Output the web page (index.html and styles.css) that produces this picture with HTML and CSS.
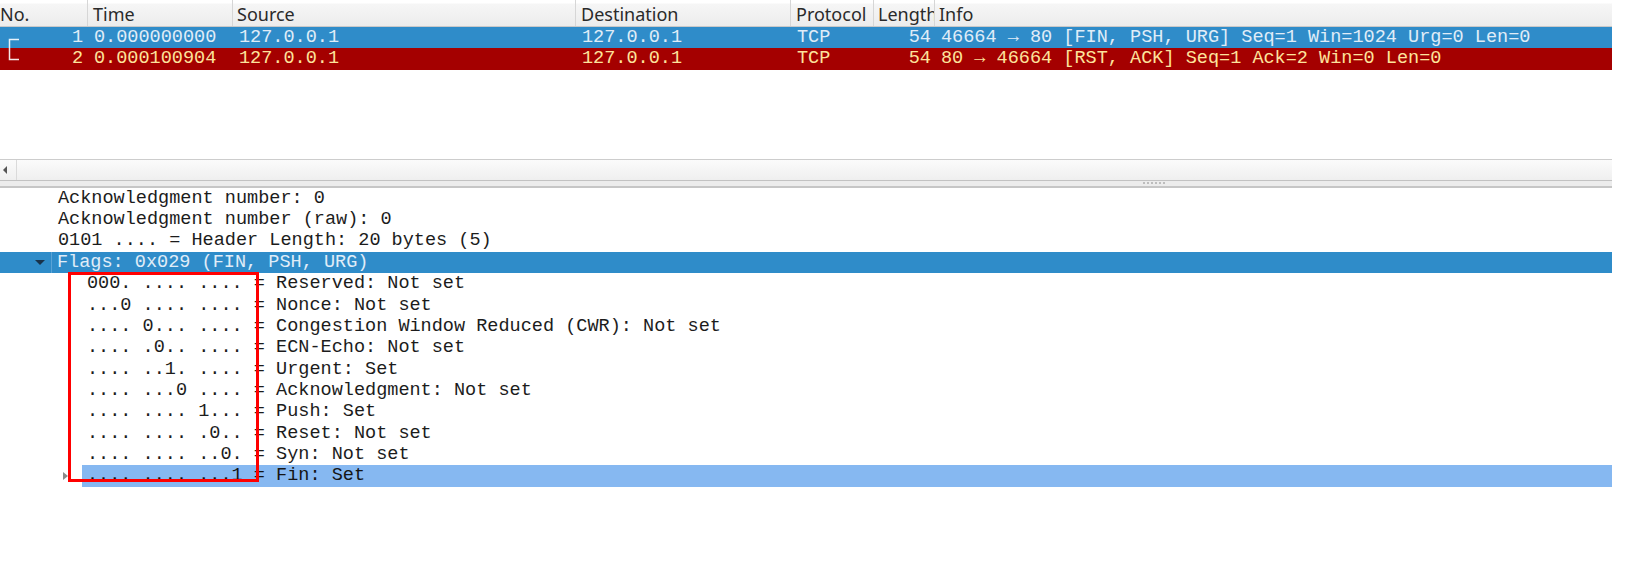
FILE: index.html
```html
<!DOCTYPE html>
<html>
<head>
<meta charset="utf-8">
<link rel="stylesheet" href="styles.css">
</head>
<body>
<div class="app">
  <div class="plist">
    <div class="phead">
      <div class="hc c-no">No.</div>
      <div class="hc c-time">Time</div>
      <div class="hc c-src">Source</div>
      <div class="hc c-dst">Destination</div>
      <div class="hc c-proto">Protocol</div>
      <div class="hc c-len">Length</div>
      <div class="hc c-info">Info</div>
    </div>
    <div class="prow prow-sel">
      <div class="pc c-no"><svg class="rel" width="20" height="22" viewBox="0 0 20 22"><path d="M19 12.5H9.5V22" fill="none" stroke="#e8f2fb" stroke-width="1.5"/></svg><span>1</span></div>
      <div class="pc c-time">0.000000000</div>
      <div class="pc c-src">127.0.0.1</div>
      <div class="pc c-dst">127.0.0.1</div>
      <div class="pc c-proto">TCP</div>
      <div class="pc c-len">54</div>
      <div class="pc c-info">46664 → 80 [FIN, PSH, URG] Seq=1 Win=1024 Urg=0 Len=0</div>
    </div>
    <div class="prow prow-bad">
      <div class="pc c-no"><svg class="rel" width="20" height="22" viewBox="0 0 20 22"><path d="M9.5 0V11.5H19" fill="none" stroke="#f4e6e6" stroke-width="1.5"/></svg><span>2</span></div>
      <div class="pc c-time">0.000100904</div>
      <div class="pc c-src">127.0.0.1</div>
      <div class="pc c-dst">127.0.0.1</div>
      <div class="pc c-proto">TCP</div>
      <div class="pc c-len">54</div>
      <div class="pc c-info">80 → 46664 [RST, ACK] Seq=1 Ack=2 Win=0 Len=0</div>
    </div>
    <div class="pempty"></div>
  </div>
  <div class="hscroll">
    <div class="sbtn"><span class="larrow"></span></div>
  </div>
  <div class="splitter"><span class="grip"></span></div>
  <div class="tree">
    <div class="trow t1">Acknowledgment number: 0</div>
    <div class="trow t1">Acknowledgment number (raw): 0</div>
    <div class="trow t1">0101 .... = Header Length: 20 bytes (5)</div>
    <div class="trow tsel">
      <div class="gut"><span class="down"></span></div>
      <div class="ttext">Flags: 0x029 (FIN, PSH, URG)</div>
    </div>
    <div class="trow t2">000. .... .... = Reserved: Not set</div>
    <div class="trow t2">...0 .... .... = Nonce: Not set</div>
    <div class="trow t2">.... 0... .... = Congestion Window Reduced (CWR): Not set</div>
    <div class="trow t2">.... .0.. .... = ECN-Echo: Not set</div>
    <div class="trow t2">.... ..1. .... = Urgent: Set</div>
    <div class="trow t2">.... ...0 .... = Acknowledgment: Not set</div>
    <div class="trow t2">.... .... 1... = Push: Set</div>
    <div class="trow t2">.... .... .0.. = Reset: Not set</div>
    <div class="trow t2">.... .... ..0. = Syn: Not set</div>
    <div class="trow tfin">
      <div class="fgut"><span class="right"></span></div>
      <div class="fsel">.... .... ...1 = Fin: Set</div>
    </div>
    <div class="redbox"></div>
  </div>
</div>
</body>
</html>
```

FILE: styles.css
```css
html, body {
  margin: 0;
  padding: 0;
  background: #ffffff;
}

.app {
  width: 1612px;
  font-family: "Liberation Mono", monospace;
  font-size: 18.55px;
  color: #1c1c1c;
}

/* packet list */
.phead {
  display: flex;
  height: 26px;
  border-bottom: 1px solid #c9c9c9;
  background: linear-gradient(#ffffff 0px, #ffffff 3px, #f6f6f6 4px, #ececec 26px);
  font-family: "Noto Sans", sans-serif;
  font-size: 18px;
  color: #2a2a2a;
  line-height: 26px;
}

.hc {
  box-sizing: border-box;
  padding-left: 5px;
  border-right: 1px solid #d6d6d6;
  overflow: hidden;
  white-space: nowrap;
  padding-top: 1px;
}

.hc.c-no { padding-left: 0; }
.hc.c-src { padding-left: 4px; }
.hc.c-len { padding-left: 4px; }
.hc.c-info { border-right: none; padding-left: 4px; }

.c-no { width: 88px; }
.c-time { width: 145px; }
.c-src { width: 343px; }
.c-dst { width: 215px; }
.c-proto { width: 83px; }
.c-len { width: 61px; }
.c-info { flex: 1; }

.prow {
  display: flex;
  height: 21.36px;
  line-height: 21.36px;
  white-space: nowrap;
}

.prow-sel {
  background: #2f8cc9;
  color: #e0edf8;
}

.prow-bad {
  background: #a40000;
  color: #fde39c;
}

.pc {
  box-sizing: border-box;
  padding-left: 6px;
  overflow: hidden;
}

.pc.c-no {
  display: flex;
  justify-content: space-between;
  align-items: center;
  padding-left: 0;
  padding-right: 5px;
}

.pc.c-len {
  text-align: right;
  padding-right: 4px;
}

.pc.c-info { padding-left: 6px; }

.rel { display: block; flex: none; }

.pempty { height: 89px; }

/* horizontal scrollbar */
.hscroll {
  height: 20px;
  border-top: 1px solid #cdcdcd;
  background: linear-gradient(#fbfbfb, #efefef);
  display: flex;
}

.sbtn {
  width: 16px;
  border-right: 1px solid #dadada;
  display: flex;
  align-items: center;
  justify-content: center;
}

.larrow {
  width: 0;
  height: 0;
  border-top: 4px solid transparent;
  border-bottom: 4px solid transparent;
  border-right: 4px solid #555;
  margin-right: 6px;
}

/* splitter */
.splitter {
  height: 5px;
  border-top: 1px solid #c2c2c2;
  border-bottom: 2px solid #c6c6c6;
  background: #ececec;
  display: flex;
  justify-content: flex-start;
  align-items: center;
}

.grip {
  margin-left: 1143px;
  width: 24px;
  height: 2px;
  background: repeating-linear-gradient(90deg, #bdbdbd 0, #bdbdbd 2px, transparent 2px, transparent 4px);
}

/* detail tree */
.tree {
  position: relative;
  white-space: nowrap;
}

.trow {
  height: 21.36px;
  line-height: 21.36px;
}

.t1 { padding-left: 58px; }
.t2 { padding-left: 87px; }

.tsel {
  display: flex;
  background: #2f8cc9;
  color: #e0edf8;
}

.gut {
  width: 52px;
  flex: none;
  border-right: 1px solid #5aa3d6;
  display: flex;
  align-items: center;
  justify-content: flex-end;
  padding-right: 6px;
  box-sizing: border-box;
}

.down {
  width: 0;
  height: 0;
  border-left: 5px solid transparent;
  border-right: 5px solid transparent;
  border-top: 5px solid #18324a;
}

.ttext { padding-left: 5px; }

.tfin {
  display: flex;
}

.fgut {
  width: 82px;
  flex: none;
  display: flex;
  align-items: center;
  padding-left: 63px;
  box-sizing: border-box;
}

.right {
  width: 0;
  height: 0;
  border-top: 4px solid transparent;
  border-bottom: 4px solid transparent;
  border-left: 5px solid #8a8a8a;
}

.fsel {
  flex: 1;
  background: #86b8f1;
  padding-left: 5px;
  color: #151515;
}

.redbox {
  position: absolute;
  left: 68px;
  top: 84px;
  width: 185px;
  height: 204px;
  border: 3px solid #ff0000;
}
```
